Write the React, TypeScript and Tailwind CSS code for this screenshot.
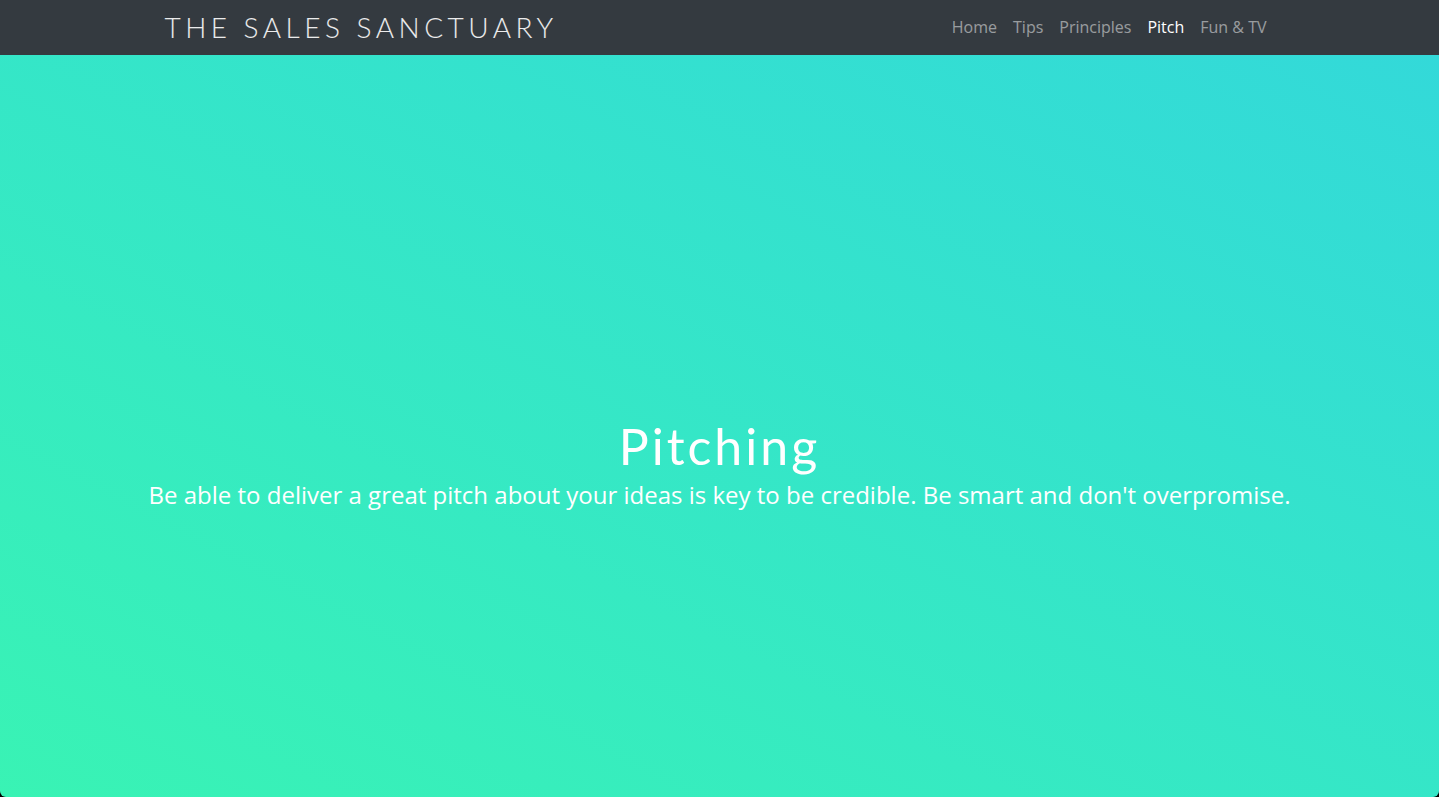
import React from 'react';

const links = [
    { label: 'Home', active: false },
    { label: 'Tips', active: false },
    { label: 'Principles', active: false },
    { label: 'Pitch', active: true },
    { label: 'Fun & TV', active: false },
];

const App: React.FC = () => {
    return (
        <div className="min-h-screen flex flex-col bg-black">
            <nav className="h-[55px] bg-[#343a40] flex items-center">
                <div className="w-[1140px] mx-auto px-[15px] flex items-center justify-between -mt-[2px]">
                    <a
                        href="#"
                        className="text-[28px] leading-none tracking-[0.16em] text-white/90 font-light"
                        style={{ fontFamily: 'Lato, "Open Sans", sans-serif' }}
                    >
                        THE SALES SANCTUARY
                    </a>
                    <ul className="flex items-center font-['Open_Sans',sans-serif] text-base">
                        {links.map(link => (
                            <li key={link.label}>
                                <a
                                    href="#"
                                    className={`block px-2 py-2 ${link.active ? 'text-white' : 'text-white/50'}`}
                                >
                                    {link.label}
                                </a>
                            </li>
                        ))}
                    </ul>
                </div>
            </nav>
            <header className="flex-1 h-[742px] bg-gradient-to-tr from-[#39f3b4] to-[#33d9d9] rounded-b-[6px] flex flex-col items-center justify-center text-white text-center pt-[76px]">
                <h1 className="text-[50px] leading-tight font-normal font-['Lato',sans-serif] tracking-[0.06em]">Pitching</h1>
                <p className="text-[24px] font-['Open_Sans',sans-serif]">
                    Be able to deliver a great pitch about your ideas is key to be credible. Be smart and don't overpromise.
                </p>
            </header>
        </div>
    );
};

export default App;
